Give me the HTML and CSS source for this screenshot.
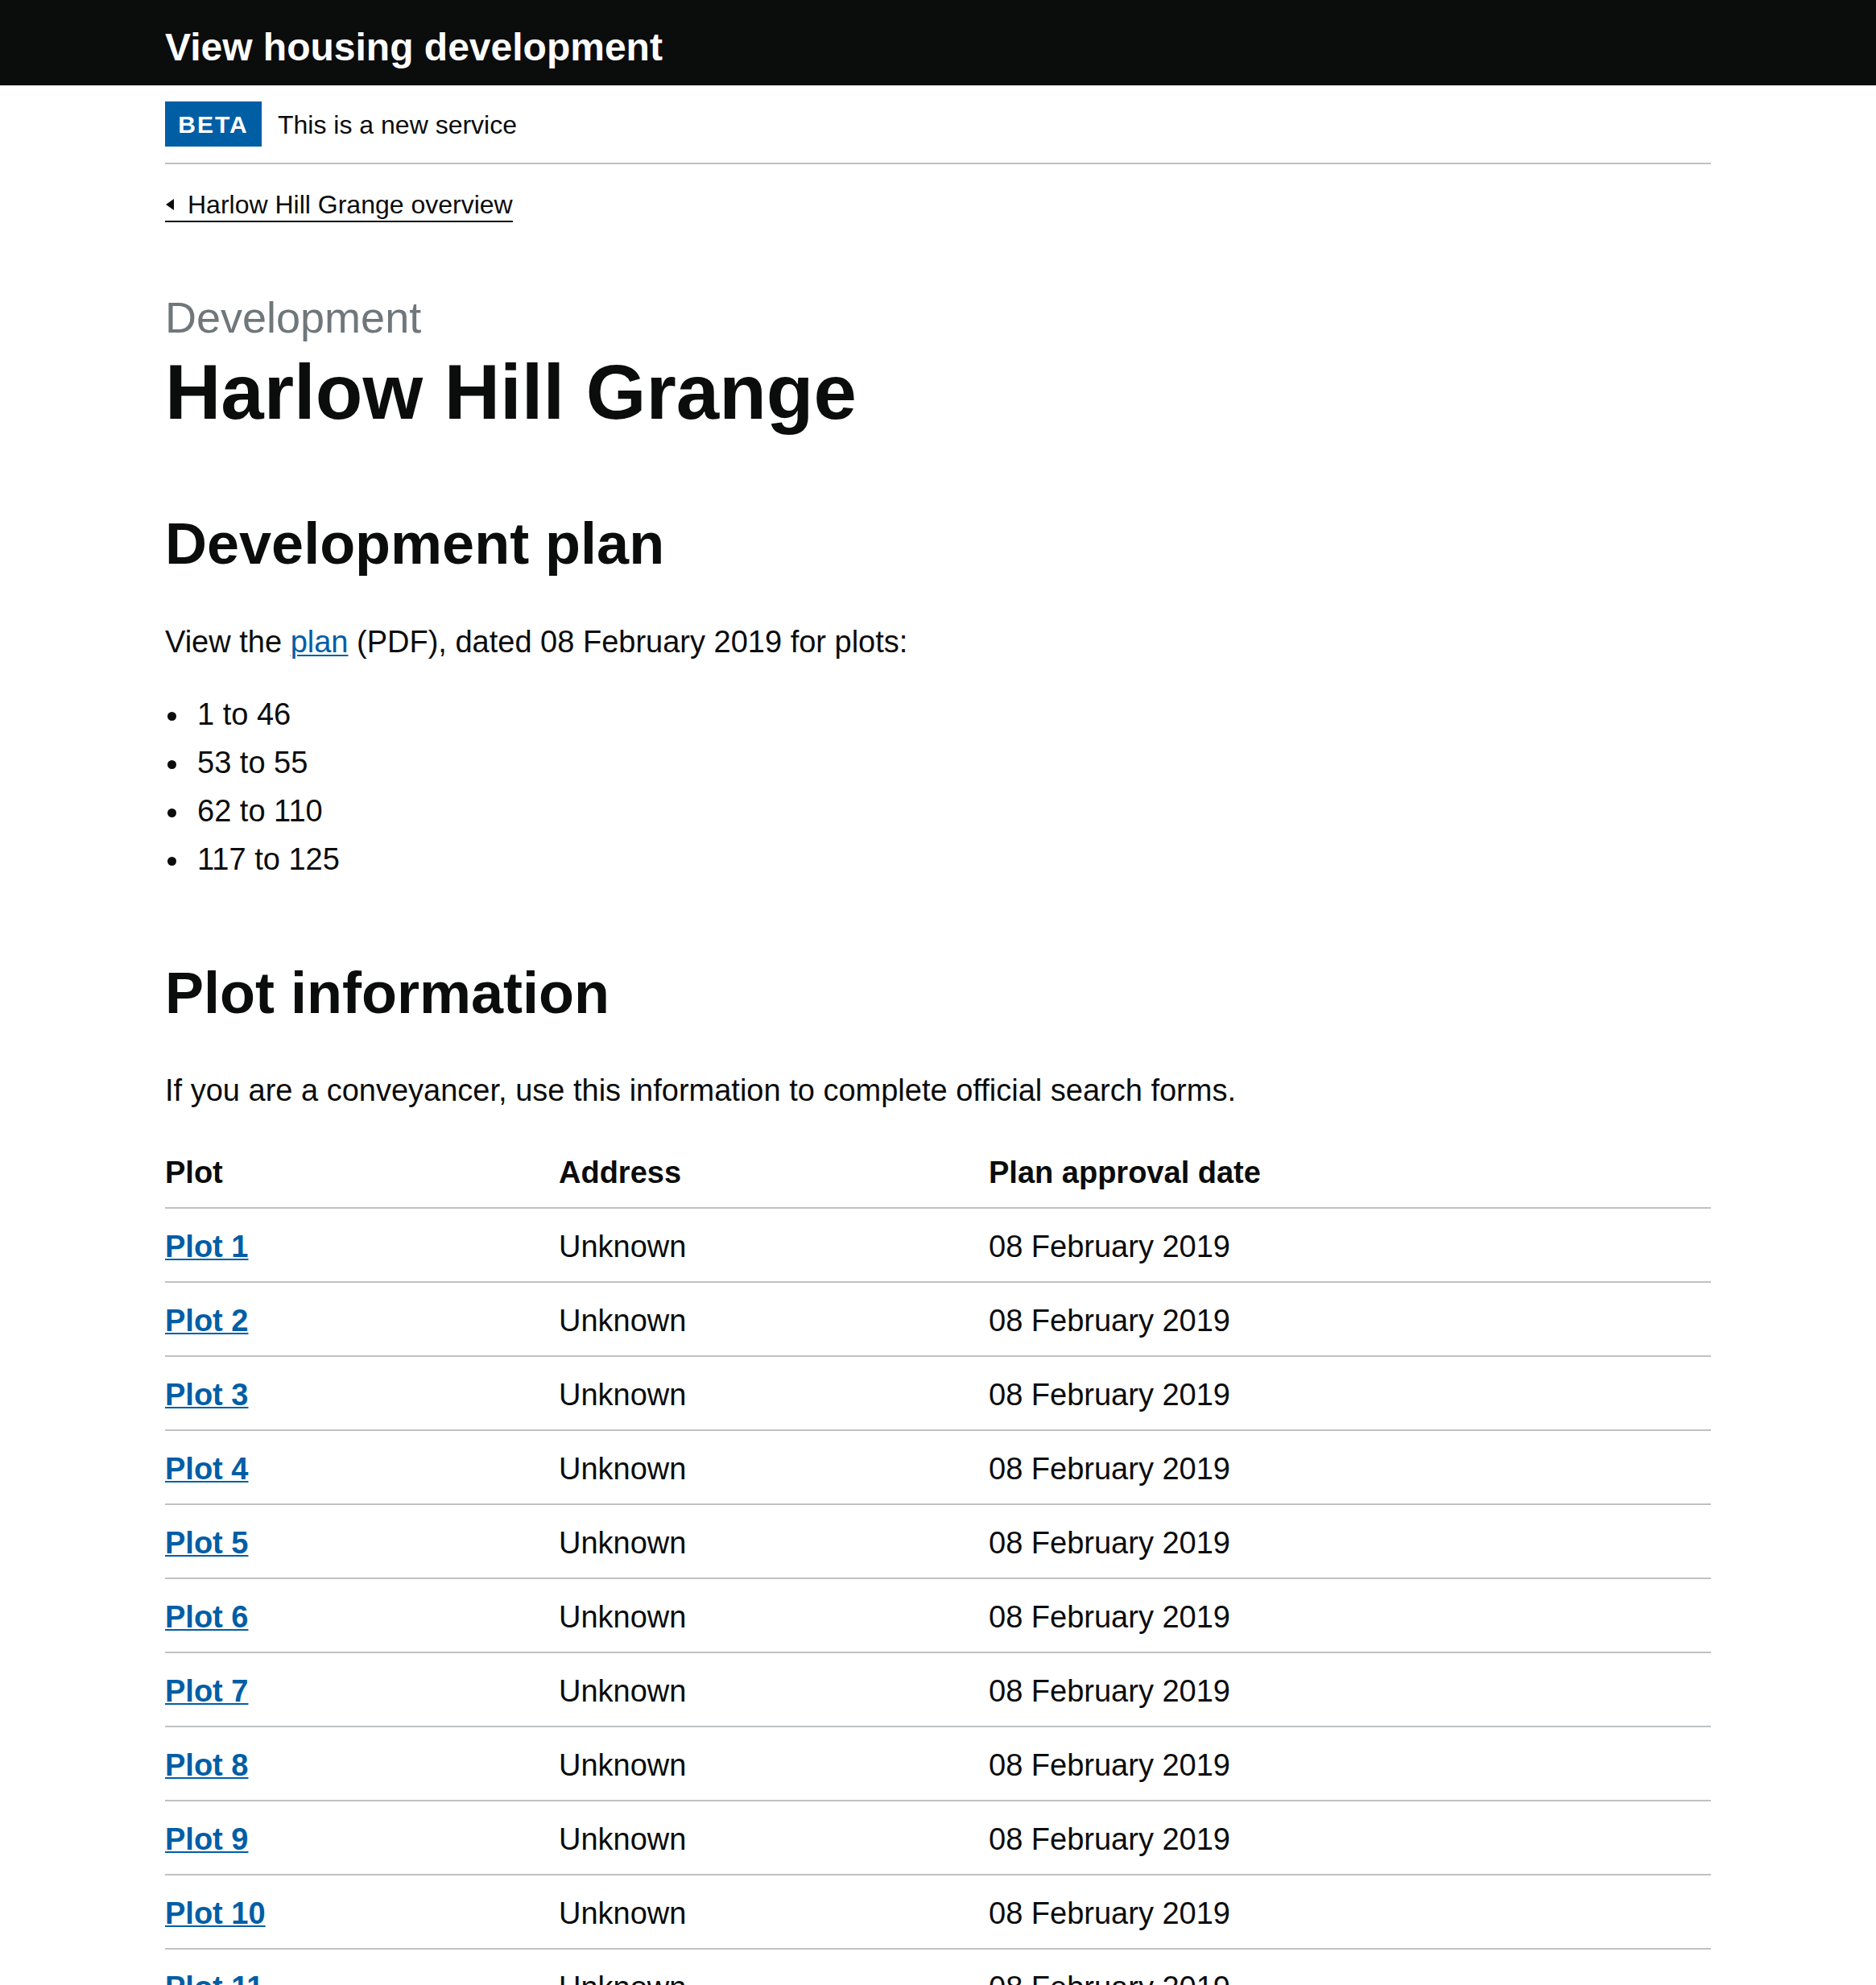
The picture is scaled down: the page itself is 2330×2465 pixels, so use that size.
FILE: index.html
```html
<!DOCTYPE html>
<html lang="en">
<head>
<meta charset="utf-8">
<title>Harlow Hill Grange - View housing development</title>
<link rel="stylesheet" href="styles.css">
</head>
<body>
<header class="site-header">
  <div class="container">
    <a class="service-name" href="#">View housing development</a>
  </div>
</header>
<div class="container">
  <div class="phase-banner">
    <strong class="phase-tag">BETA</strong>
    <span class="phase-text">This is a new service</span>
  </div>
  <a class="back-link" href="#">Harlow Hill Grange overview</a>
  <main class="main">
    <span class="caption">Development</span>
    <h1 class="heading-xl">Harlow Hill Grange</h1>

    <h2 class="heading-l">Development plan</h2>
    <p class="body body-first">View the <a class="link" href="#">plan</a> (PDF), dated 08 February 2019 for plots:</p>
    <ul class="bullets">
      <li>1 to 46</li>
      <li>53 to 55</li>
      <li>62 to 110</li>
      <li>117 to 125</li>
    </ul>

    <h2 class="heading-l heading-spaced">Plot information</h2>
    <p class="body">If you are a conveyancer, use this information to complete official search forms.</p>
    <table class="table">
      <colgroup>
        <col class="col-plot">
        <col class="col-address">
        <col class="col-date">
      </colgroup>
      <thead>
        <tr><th>Plot</th><th>Address</th><th>Plan approval date</th></tr>
      </thead>
      <tbody>
        <tr><td><a class="plot-link" href="#">Plot 1</a></td><td>Unknown</td><td>08 February 2019</td></tr>
        <tr><td><a class="plot-link" href="#">Plot 2</a></td><td>Unknown</td><td>08 February 2019</td></tr>
        <tr><td><a class="plot-link" href="#">Plot 3</a></td><td>Unknown</td><td>08 February 2019</td></tr>
        <tr><td><a class="plot-link" href="#">Plot 4</a></td><td>Unknown</td><td>08 February 2019</td></tr>
        <tr><td><a class="plot-link" href="#">Plot 5</a></td><td>Unknown</td><td>08 February 2019</td></tr>
        <tr><td><a class="plot-link" href="#">Plot 6</a></td><td>Unknown</td><td>08 February 2019</td></tr>
        <tr><td><a class="plot-link" href="#">Plot 7</a></td><td>Unknown</td><td>08 February 2019</td></tr>
        <tr><td><a class="plot-link" href="#">Plot 8</a></td><td>Unknown</td><td>08 February 2019</td></tr>
        <tr><td><a class="plot-link" href="#">Plot 9</a></td><td>Unknown</td><td>08 February 2019</td></tr>
        <tr><td><a class="plot-link" href="#">Plot 10</a></td><td>Unknown</td><td>08 February 2019</td></tr>
        <tr><td><a class="plot-link" href="#">Plot 11</a></td><td>Unknown</td><td>08 February 2019</td></tr>
        <tr><td><a class="plot-link" href="#">Plot 12</a></td><td>Unknown</td><td>08 February 2019</td></tr>
      </tbody>
    </table>
  </main>
</div>
</body>
</html>
```
FILE: styles.css
```css
* { box-sizing: border-box; }

html, body {
  margin: 0;
  padding: 0;
  background: #ffffff;
  color: #0b0c0c;
  font-family: "Liberation Sans", Arial, Helvetica, sans-serif;
}

.container {
  width: 1920px;
  margin: 0 auto;
}

.site-header {
  background: #0b0c0c;
  height: 106px;
  padding-top: 29px;
}

.service-name {
  display: inline-block;
  color: #ffffff;
  font-size: 48px;
  font-weight: 700;
  line-height: 60px;
  text-decoration: none;
}

.phase-banner {
  display: flex;
  align-items: center;
  gap: 20px;
  padding: 20px 0;
  border-bottom: 2px solid #bfc1c3;
}

.phase-tag {
  display: flex;
  align-items: center;
  justify-content: center;
  width: 120px;
  height: 56px;
  background: #005ea5;
  color: #ffffff;
  font-size: 30px;
  font-weight: 700;
  letter-spacing: 2px;
  padding-top: 2px;
}

.phase-text {
  font-size: 32px;
  line-height: 40px;
  padding-top: 2px;
}

.back-link {
  position: relative;
  display: inline-block;
  margin-top: 28px;
  padding-left: 28px;
  padding-top: 2px;
  font-size: 32px;
  line-height: 40px;
  color: #0b0c0c;
  text-decoration: none;
  border-bottom: 2px solid #0b0c0c;
}

.back-link::before {
  content: "";
  position: absolute;
  left: 1px;
  top: 15px;
  width: 0;
  height: 0;
  border-top: 7px solid transparent;
  border-bottom: 7px solid transparent;
  border-right: 10px solid #0b0c0c;
}

.main {
  display: block;
  padding-top: 88px;
}

.caption {
  display: block;
  font-size: 54px;
  line-height: 60px;
  color: #6f777b;
}

.heading-xl {
  margin: 13px 0 0;
  font-size: 96px;
  font-weight: 700;
  line-height: 100px;
}

.heading-l {
  margin: 98px 0 0;
  font-size: 72px;
  font-weight: 700;
  line-height: 80px;
}

.heading-spaced {
  margin-top: 101px;
}

.body {
  margin: 56px 0 0;
  font-size: 38px;
  line-height: 50px;
}

.body-first {
  margin-top: 57px;
}

.link {
  color: #005ea5;
  text-decoration: underline;
  text-decoration-thickness: 2px;
  text-underline-offset: 3px;
}

.bullets {
  margin: 40px 0 0;
  padding-left: 40px;
  list-style: none;
  font-size: 38px;
  line-height: 50px;
}

.bullets li {
  position: relative;
  margin-bottom: 10px;
}

.bullets li::before {
  content: "";
  position: absolute;
  left: -37px;
  top: 22px;
  width: 11px;
  height: 11px;
  border-radius: 50%;
  background: #0b0c0c;
}

.bullets li:last-child {
  margin-bottom: 0;
}

.table {
  margin-top: 30px;
  width: 100%;
  border-collapse: collapse;
  border-spacing: 0;
  table-layout: fixed;
  font-size: 38px;
  line-height: 50px;
}

.col-plot { width: 489px; }
.col-address { width: 534px; }

.table th,
.table td {
  text-align: left;
  vertical-align: top;
  padding: 22px 40px 18px 0;
  border-bottom: 2px solid #bfc1c3;
}

.table th {
  font-weight: 700;
}

.plot-link {
  color: #005ea5;
  font-weight: 700;
  text-decoration: underline;
  text-decoration-thickness: 2px;
  text-underline-offset: 2px;
}
```
